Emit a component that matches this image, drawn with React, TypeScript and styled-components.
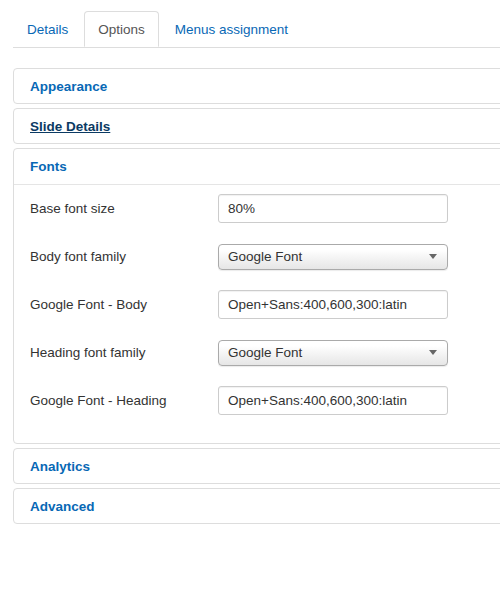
import React from "react";
import styled, { createGlobalStyle } from "styled-components";

const GlobalStyle = createGlobalStyle`
  html, body {
    margin: 0;
    padding: 0;
    background: #ffffff;
    overflow: hidden;
  }
  body {
    font-family: "Liberation Sans", Arial, sans-serif;
    font-size: 13.5px;
    color: #333333;
  }
`;

const Page = styled.div`
  width: 500px;
  height: 592px;
  padding: 11px 0 0 13px;
  box-sizing: border-box;
  overflow: hidden;
`;

const TabBar = styled.ul`
  display: flex;
  margin: 0;
  padding: 0;
  list-style: none;
  border-bottom: 1px solid #dddddd;
  width: 520px;
  height: 36px;
`;

const Tab = styled.li<{ $active?: boolean }>`
  display: flex;
  align-items: center;
  padding: 0 13px;
  margin-right: 2px;
  margin-bottom: -1px;
  height: 36px;
  box-sizing: border-box;
  font-size: 13.5px;
  color: ${({ $active }) => ($active ? "#555555" : "#0868b5")};
  background: #ffffff;
  border: 1px solid ${({ $active }) => ($active ? "#dddddd" : "transparent")};
  border-bottom-color: ${({ $active }) => ($active ? "#ffffff" : "transparent")};
  border-radius: 4px 4px 0 0;
  cursor: pointer;
`;

const Accordion = styled.div`
  margin-top: 20px;
  width: 520px;
`;

const Panel = styled.div`
  border: 1px solid #dddddd;
  border-radius: 4px;
  margin-bottom: 4px;
  background: #ffffff;
`;

const PanelHeader = styled.div<{ $open?: boolean }>`
  height: ${({ $open }) => ($open ? "35px" : "34px")};
  display: flex;
  align-items: center;
  padding-left: 16px;
  border-bottom: ${({ $open }) => ($open ? "1px solid #e5e5e5" : "none")};
`;

const PanelTitle = styled.a<{ $hover?: boolean }>`
  font-size: 13.5px;
  font-weight: bold;
  color: ${({ $hover }) => ($hover ? "#0b3a63" : "#0868b5")};
  text-decoration: ${({ $hover }) => ($hover ? "underline" : "none")};
  cursor: pointer;
`;

const PanelBody = styled.div`
  padding: 9px 0 28px 16px;
  display: flex;
  flex-direction: column;
  gap: 19px;
`;

const Row = styled.div`
  display: flex;
  align-items: center;
  height: 29px;
`;

const Label = styled.label`
  width: 188px;
  font-size: 13.5px;
  color: #333333;
`;

const TextInput = styled.div`
  width: 230px;
  height: 29px;
  box-sizing: border-box;
  border: 1px solid #cccccc;
  border-radius: 3px;
  padding: 0 9px;
  display: flex;
  align-items: center;
  font-size: 13.5px;
  color: #333333;
  box-shadow: inset 0 1px 1px rgba(0, 0, 0, 0.06);
`;

const SelectBox = styled.div`
  width: 230px;
  height: 26px;
  box-sizing: border-box;
  border: 1px solid #aaaaaa;
  border-radius: 4px;
  padding: 0 9px;
  display: flex;
  align-items: center;
  justify-content: space-between;
  font-size: 13.5px;
  color: #333333;
  background: linear-gradient(#ffffff 20%, #f2f2f2 60%, #e6e6e6);
  box-shadow: 0 1px 1px rgba(0, 0, 0, 0.08);
`;

const Caret = styled.span`
  width: 0;
  height: 0;
  border-left: 4px solid transparent;
  border-right: 4px solid transparent;
  border-top: 5px solid #666666;
  margin-right: 1px;
`;

type Field = { label: string; value: string; kind: "text" | "select" };

const fields: Field[] = [
  { label: "Base font size", value: "80%", kind: "text" },
  { label: "Body font family", value: "Google Font", kind: "select" },
  { label: "Google Font - Body", value: "Open+Sans:400,600,300:latin", kind: "text" },
  { label: "Heading font family", value: "Google Font", kind: "select" },
  { label: "Google Font - Heading", value: "Open+Sans:400,600,300:latin", kind: "text" },
];

export default function App() {
  return (
    <>
      <GlobalStyle />
      <Page>
        <TabBar>
          <Tab>Details</Tab>
          <Tab $active>Options</Tab>
          <Tab>Menus assignment</Tab>
        </TabBar>
        <Accordion>
          <Panel>
            <PanelHeader>
              <PanelTitle>Appearance</PanelTitle>
            </PanelHeader>
          </Panel>
          <Panel>
            <PanelHeader>
              <PanelTitle $hover>Slide Details</PanelTitle>
            </PanelHeader>
          </Panel>
          <Panel>
            <PanelHeader $open>
              <PanelTitle>Fonts</PanelTitle>
            </PanelHeader>
            <PanelBody>
              {fields.map((f) => (
                <Row key={f.label}>
                  <Label>{f.label}</Label>
                  {f.kind === "text" ? (
                    <TextInput>{f.value}</TextInput>
                  ) : (
                    <SelectBox>
                      {f.value}
                      <Caret />
                    </SelectBox>
                  )}
                </Row>
              ))}
            </PanelBody>
          </Panel>
          <Panel>
            <PanelHeader>
              <PanelTitle>Analytics</PanelTitle>
            </PanelHeader>
          </Panel>
          <Panel>
            <PanelHeader>
              <PanelTitle>Advanced</PanelTitle>
            </PanelHeader>
          </Panel>
        </Accordion>
      </Page>
    </>
  );
}
